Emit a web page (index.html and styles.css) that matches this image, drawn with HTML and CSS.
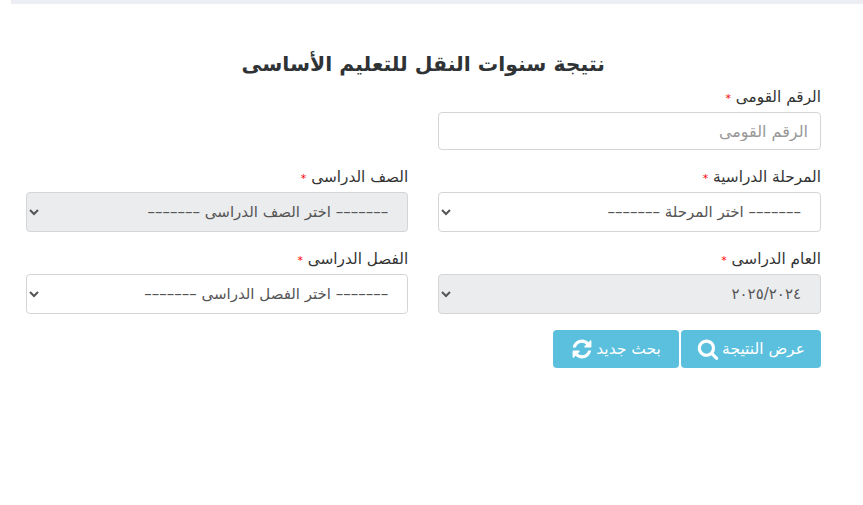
FILE: index.html
```html
<!DOCTYPE html>
<html lang="ar" dir="rtl">
<head>
    <meta charset="UTF-8">
    <meta name="viewport" content="width=device-width, initial-scale=1.0">
    <title>نتيجة سنوات النقل للتعليم الأساسى</title>
    <link rel="stylesheet" href="styles.css">
</head>
<body>

<div class="top-bar"></div>

<div class="container">
    <h1 class="page-title">نتيجة سنوات النقل للتعليم الأساسى</h1>

    <div class="form-row">
        <div class="field">
            <label class="field-label">الرقم القومى <span class="req">*</span></label>
            <input class="control control-input" type="text" placeholder="الرقم القومى">
        </div>
        <div class="field"></div>
    </div>

    <div class="form-row">
        <div class="field">
            <label class="field-label">المرحلة الدراسية <span class="req">*</span></label>
            <select class="control control-select">
                <option>––––––– اختر المرحلة –––––––</option>
            </select>
        </div>
        <div class="field">
            <label class="field-label">الصف الدراسى <span class="req">*</span></label>
            <select class="control control-select" disabled>
                <option>––––––– اختر الصف الدراسى –––––––</option>
            </select>
        </div>
    </div>

    <div class="form-row">
        <div class="field">
            <label class="field-label">العام الدراسى <span class="req">*</span></label>
            <select class="control control-select" disabled>
                <option>٢٠٢٥/٢٠٢٤</option>
            </select>
        </div>
        <div class="field">
            <label class="field-label">الفصل الدراسى <span class="req">*</span></label>
            <select class="control control-select">
                <option>––––––– اختر الفصل الدراسى –––––––</option>
            </select>
        </div>
    </div>

    <div class="buttons">
        <button class="button button-show">
            عرض النتيجة
            <svg class="icon" viewBox="0 0 1792 1792"><path d="M1216 832q0-185-131.5-316.5t-316.5-131.5-316.5 131.5-131.5 316.5 131.5 316.5 316.5 131.5 316.5-131.5 131.5-316.5zm512 832q0 52-38 90t-90 38q-54 0-90-38l-343-342q-179 124-399 124-143 0-273.5-55.5t-225-150-150-225-55.5-273.5 55.5-273.5 150-225 225-150 273.5-55.5 273.5 55.5 225 150 150 225 55.5 273.5q0 220-124 399l343 343q37 37 37 90z"/></svg>
        </button>
        <button class="button button-new">
            بحث جديد
            <svg class="icon" viewBox="0 0 1792 1792"><path d="M1639 1056q0 5-1 7-64 268-268 434.5t-478 166.5q-146 0-282.5-55t-243.5-157l-129 129q-19 19-45 19t-45-19-19-45v-448q0-26 19-45t45-19h448q26 0 45 19t19 45-19 45l-137 137q71 66 161 102t187 36q134 0 250-65t186-179q11-17 53-117 8-23 30-23h192q13 0 22.5 9.5t9.5 22.5zm25-800v448q0 26-19 45t-45 19h-448q-26 0-45-19t-19-45 19-45l138-138q-148-137-349-137-134 0-250 65t-186 179q-11 17-53 117-8 23-30 23h-199q-13 0-22.5-9.5t-9.5-22.5v-7q65-268 270-434.5t480-166.5q146 0 284 55.5t245 156.5l130-129q19-19 45-19t45 19 19 45z"/></svg>
        </button>
    </div>
</div>

</body>
</html>
```

FILE: styles.css
```css
body {
    font-family: "DejaVu Sans", "Noto Sans", sans-serif;
    margin: 0;
    padding: 0;
    background-color: #fff;
    color: #333;
    font-size: 15px;
}
.top-bar {
    height: 4px;
    margin-left: 11px;
    background-color: #eceef3;
}
.container {
    padding: 46px 42px 0 25.5px;
}
.page-title {
    margin: 0 0 10px;
    font-size: 20.4px;
    line-height: 28px;
    font-weight: bold;
    text-align: center;
    color: #2f3336;
}
.form-row {
    display: flex;
    gap: 30px;
    margin-bottom: 18px;
}
.field {
    flex: 1;
    min-width: 0;
}
.field-label {
    display: block;
    height: 18px;
    line-height: 18px;
    margin-bottom: 6px;
    font-size: 15.3px;
    color: #333;
}
.req {
    color: #f00;
    font-size: 11px;
}
.control {
    display: block;
    width: 100%;
    box-sizing: border-box;
    border: 1px solid #d5d5d5;
    border-radius: 4px;
    background-color: #fff;
    color: #555;
    font-family: inherit;
    font-size: 15px;
}
.control-input {
    height: 38px;
    padding: 0 12px;
    font-size: 16px;
}
.control-input::placeholder {
    color: #999;
}
.control-select {
    height: 40px;
    padding: 0 15px 0 8px;
}
.control-select:disabled {
    background-color: #ebecee;
    opacity: 1;
    color: #555;
}
.buttons {
    display: flex;
    gap: 2px;
    margin-top: -2px;
}
.button {
    display: flex;
    align-items: center;
    justify-content: center;
    gap: 3px;
    height: 38px;
    padding: 0;
    border: none;
    border-radius: 4px;
    background-color: #5bc0de;
    color: #fff;
    font-family: inherit;
    font-size: 15.5px;
    cursor: pointer;
}
.button-show {
    width: 140px;
}
.button-new {
    width: 126px;
}
.icon {
    width: 22px;
    height: 22px;
    fill: #fff;
}
```
